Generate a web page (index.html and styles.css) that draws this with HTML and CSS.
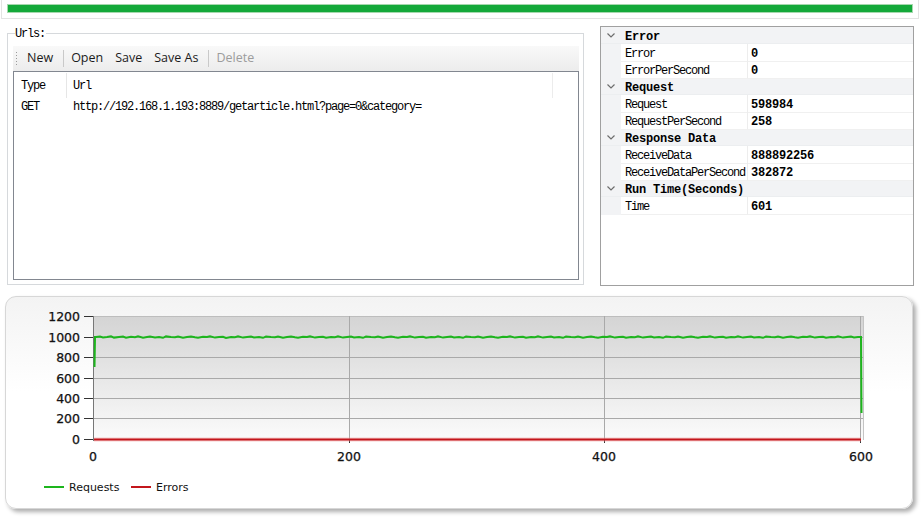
FILE: index.html
```html
<!DOCTYPE html>
<html>
<head>
<meta charset="utf-8">
<link rel="stylesheet" href="styles.css">
</head>
<body>
<div class="topbar"><div class="progress"></div></div>
<div class="middle">
  <div class="group">
    <span class="group-label">Urls:</span>
    <div class="toolbar">
      <span class="grip"></span>
      <span class="tb-btn">New</span>
      <span class="tb-sep"></span>
      <span class="tb-btn">Open</span>
      <span class="tb-btn">Save</span>
      <span class="tb-btn">Save As</span>
      <span class="tb-sep"></span>
      <span class="tb-btn disabled">Delete</span>
    </div>
    <div class="list">
      <div class="list-head">
        <span class="col-type">Type</span>
        <span class="col-url">Url</span>
      </div>
      <div class="list-row">
        <span class="col-type">GET</span>
        <span class="col-url nob">http://192.168.1.193:8889/getarticle.html?page=0&amp;category=</span>
      </div>
    </div>
  </div>
  <div class="props">
    <div class="cat"><span class="chev"><svg width="8" height="5" viewBox="0 0 8 5"><path d="M0.5 0.5 L4 4 L7.5 0.5" fill="none" stroke="#6d6d6d" stroke-width="1.2"/></svg></span><span class="cat-name">Error</span></div>
    <div class="prop"><span class="pm"></span><span class="pn">Error</span><span class="pv">0</span></div>
    <div class="prop"><span class="pm"></span><span class="pn">ErrorPerSecond</span><span class="pv">0</span></div>
    <div class="cat"><span class="chev"><svg width="8" height="5" viewBox="0 0 8 5"><path d="M0.5 0.5 L4 4 L7.5 0.5" fill="none" stroke="#6d6d6d" stroke-width="1.2"/></svg></span><span class="cat-name">Request</span></div>
    <div class="prop"><span class="pm"></span><span class="pn">Request</span><span class="pv">598984</span></div>
    <div class="prop"><span class="pm"></span><span class="pn">RequestPerSecond</span><span class="pv">258</span></div>
    <div class="cat"><span class="chev"><svg width="8" height="5" viewBox="0 0 8 5"><path d="M0.5 0.5 L4 4 L7.5 0.5" fill="none" stroke="#6d6d6d" stroke-width="1.2"/></svg></span><span class="cat-name">Response Data</span></div>
    <div class="prop"><span class="pm"></span><span class="pn">ReceiveData</span><span class="pv">888892256</span></div>
    <div class="prop"><span class="pm"></span><span class="pn">ReceiveDataPerSecond</span><span class="pv">382872</span></div>
    <div class="cat"><span class="chev"><svg width="8" height="5" viewBox="0 0 8 5"><path d="M0.5 0.5 L4 4 L7.5 0.5" fill="none" stroke="#6d6d6d" stroke-width="1.2"/></svg></span><span class="cat-name">Run Time(Seconds)</span></div>
    <div class="prop"><span class="pm"></span><span class="pn">Time</span><span class="pv">601</span></div>
  </div>
</div>
<div class="chart">
  <svg class="chart-svg" width="906" height="211" viewBox="6 297 906 211">
    <defs>
      <linearGradient id="pg" x1="0" y1="0" x2="0" y2="1">
        <stop offset="0" stop-color="#d4d4d4"/>
        <stop offset="1" stop-color="#fbfbfb"/>
      </linearGradient>
    </defs>
    <rect x="94" y="316" width="770" height="124" fill="url(#pg)"/>
    <g stroke="#a9a9a9" stroke-width="1">
      <line x1="94" y1="316.5" x2="864" y2="316.5" stroke="#bdbdbd"/>
      <line x1="94" y1="337.5" x2="864" y2="337.5"/>
      <line x1="94" y1="357.5" x2="864" y2="357.5"/>
      <line x1="94" y1="378.5" x2="864" y2="378.5"/>
      <line x1="94" y1="398.5" x2="864" y2="398.5"/>
      <line x1="94" y1="418.5" x2="864" y2="418.5"/>
      <line x1="349.5" y1="316" x2="349.5" y2="440"/>
      <line x1="604.5" y1="316" x2="604.5" y2="440"/>
      <line x1="860.5" y1="316" x2="860.5" y2="440"/>
      <line x1="863.5" y1="316" x2="863.5" y2="440" stroke="#c4c4c4"/>
    </g>
    <g stroke="#333" stroke-width="1">
      <line x1="93.5" y1="316" x2="93.5" y2="441" stroke="#777"/>
      <line x1="84" y1="316.5" x2="93" y2="316.5"/>
      <line x1="84" y1="337.5" x2="93" y2="337.5"/>
      <line x1="84" y1="357.5" x2="93" y2="357.5"/>
      <line x1="84" y1="378.5" x2="93" y2="378.5"/>
      <line x1="84" y1="398.5" x2="93" y2="398.5"/>
      <line x1="84" y1="418.5" x2="93" y2="418.5"/>
      <line x1="84" y1="439.5" x2="93" y2="439.5"/>
      <line x1="349.5" y1="440" x2="349.5" y2="443"/>
      <line x1="604.5" y1="440" x2="604.5" y2="443"/>
      <line x1="860.5" y1="440" x2="860.5" y2="443"/>
    </g>
    <g class="ylab" text-anchor="end">
      <text x="80" y="321">1200</text>
      <text x="80" y="342">1000</text>
      <text x="80" y="362">800</text>
      <text x="80" y="383">600</text>
      <text x="80" y="403">400</text>
      <text x="80" y="423">200</text>
      <text x="80" y="444">0</text>
    </g>
    <g class="xlab" text-anchor="middle">
      <text x="93" y="461">0</text>
      <text x="349" y="461">200</text>
      <text x="604" y="461">400</text>
      <text x="861" y="461">600</text>
    </g>
    <path d="M94 439.5 H861" stroke="#f2a0a0" stroke-width="4" fill="none" opacity="0.5"/>
    <path d="M94 439.5 H861" stroke="#c3161c" stroke-width="2.2" fill="none"/>
    <polyline fill="none" stroke="#1db51d" stroke-width="2" stroke-linejoin="miter" points="94.5,367 95,337 96,337 100,336.5 103,337.5 107,337 111,336.3 114,337.6 119,337 123,336.6 126,337.8 131,336.8 135,337.2 138,336.3 143,337.7 147,337 150,336.5 155,337.4 159,337 163,337.8 166,336.4 171,337 175,337.3 178,336.6 183,337.8 187,337 191,336.4 195,337.2 198,337.7 203,336.7 207,337 210,336.3 215,337.6 219,337.1 223,336.7 226,337.9 231,336.9 235,337.2 238,336.4 243,337.6 247,337 251,336.6 254,337.5 259,337 263,337.8 266,336.5 271,337.1 275,337.3 278,336.5 283,337.7 287,337 291,336.4 295,337.3 298,337.7 303,336.8 307,337 310,336.3 315,337.6 319,337.1 323,336.7 326,337.8 331,336.9 335,337.3 338,336.4 343,337.6 347,337 351,336.6 354,337.5 359,337 363,337.8 366,336.5 371,337.1 375,337.3 378,336.5 383,337.7 387,337 391,336.4 395,337.3 398,337.7 403,336.8 407,337 410,336.3 415,337.6 419,337.1 423,336.7 426,337.8 431,336.9 435,337.3 438,336.4 443,337.6 447,337 451,336.6 454,337.5 459,337 463,337.8 466,336.5 471,337.1 475,337.3 478,336.5 483,337.7 487,337 491,336.4 495,337.3 498,337.7 503,336.8 507,337 510,336.3 515,337.6 519,337.1 523,336.7 526,337.8 531,336.9 535,337.3 538,336.4 543,337.6 547,337 551,336.6 554,337.5 559,337 563,337.8 566,336.5 571,337.1 575,337.3 578,336.5 583,337.7 587,337 591,336.4 595,337.3 598,337.7 603,336.8 607,337 610,336.3 615,337.6 619,337.1 623,336.7 626,337.8 631,336.9 635,337.3 638,336.4 643,337.6 647,337 651,336.6 654,337.5 659,337 663,337.8 666,336.5 671,337.1 675,337.3 678,336.5 683,337.7 687,337 691,336.4 695,337.3 698,337.7 703,336.8 707,337 710,336.3 715,337.6 719,337.1 723,336.7 726,337.8 731,336.9 735,337.3 738,336.4 743,337.6 747,337 751,336.6 754,337.5 759,337 763,337.8 766,336.5 771,337.1 775,337.3 778,336.5 783,337.7 787,337 791,336.4 795,337.3 798,337.7 803,336.8 807,337 810,336.3 815,337.6 819,337.1 823,336.7 826,337.8 831,336.9 835,337.3 838,336.4 843,337.6 847,337 851,336.6 854,337.5 858,337 861,337 861.5,413"/>
    <line x1="44" y1="487" x2="64" y2="487" stroke="#1db51d" stroke-width="2"/>
    <text class="leg" x="69" y="491">Requests</text>
    <line x1="131" y1="487" x2="151" y2="487" stroke="#c3161c" stroke-width="2"/>
    <text class="leg" x="156" y="491">Errors</text>
  </svg>
</div>
</body>
</html>
```
FILE: styles.css
```css
html, body {
  margin: 0;
  padding: 0;
  background: #ffffff;
}
body {
  width: 921px;
  height: 519px;
  overflow: hidden;
  font-family: "Liberation Mono", "DejaVu Sans Mono", monospace;
  color: #000;
}
.topbar {
  box-sizing: border-box;
  width: 918px;
  height: 19px;
  margin-left: 1px;
  padding: 4px 5px 0 5px;
  border: 1px solid #e3e3e3;
  border-top: 0;
}
.progress {
  box-sizing: border-box;
  height: 9px;
  background: #14a93a;
  border: 1px solid #a6d8ae;
}
.middle {
  display: flex;
  align-items: flex-start;
  padding-top: 7px;
}
.group {
  position: relative;
  box-sizing: border-box;
  width: 577px;
  height: 252px;
  margin: 7px 0 0 7px;
  padding: 12px 4px 4px 5px;
  border: 1px solid #d6d9dc;
  display: flex;
  flex-direction: column;
}
.group-label {
  position: absolute;
  top: -7px;
  left: 7px;
  padding: 0 1px 0 0;
  background: #fff;
  font-size: 12px;
  line-height: 14px;
  letter-spacing: -1.2px;
}
.toolbar {
  box-sizing: border-box;
  height: 25px;
  padding-bottom: 1px;
  display: flex;
  align-items: center;
  background: linear-gradient(#f9f9f9, #ececec);
  font-family: "Open Sans", "Noto Sans", sans-serif;
  font-size: 12.5px;
  color: #1b1b1b;
}
.grip {
  width: 1px;
  height: 13px;
  margin: 0 4px 0 3px;
  background: repeating-linear-gradient(#9a9a9a 0 1px, transparent 1px 3px);
}
.tb-btn {
  padding: 0 6px;
  line-height: 20px;
}
.tb-btn.disabled {
  color: #9c9c9c;
}
.tb-sep {
  width: 1px;
  height: 17px;
  margin: 0 1px 0 4px;
  background: #c9c9c9;
}
.list {
  box-sizing: border-box;
  height: 209px;
  border: 1px solid #828790;
  background: #fff;
  font-size: 12px;
  letter-spacing: -1.2px;
}
.list-head {
  box-sizing: border-box;
  height: 26px;
  padding-top: 1px;
  display: flex;
  align-items: stretch;
}
.list-row {
  box-sizing: border-box;
  height: 17px;
  padding-top: 0;
  display: flex;
  align-items: center;
}
.list-head span {
  display: flex;
  align-items: center;
}
.col-type {
  box-sizing: border-box;
  width: 53px;
  padding-left: 7px;
  border-right: 1px solid #e6e6e6;
  flex: none;
}
.col-url {
  box-sizing: border-box;
  width: 486px;
  padding-left: 6px;
  border-right: 1px solid #ececec;
  flex: none;
  white-space: nowrap;
}
.list-row .col-type,
.col-url.nob {
  border-right-color: transparent;
}
.props {
  box-sizing: border-box;
  width: 314px;
  height: 260px;
  margin-left: 16px;
  border: 1px solid #a0a0a0;
  background: #fff;
  font-size: 12px;
}
.cat {
  box-sizing: border-box;
  height: 17px;
  padding-top: 3px;
  display: flex;
  align-items: center;
  background: #f2f3f5;
  border-bottom: 1px solid #eceef0;
}
.chev {
  width: 20px;
  margin-top: -2px;
  display: flex;
  justify-content: center;
  align-items: center;
}
.chev svg {
  display: block;
}
.cat-name {
  padding-left: 4px;
  font-weight: bold;
  letter-spacing: -0.2px;
}
.prop {
  height: 17px;
  display: grid;
  grid-template-columns: 20px 127px 1fr;
}
.pm {
  background: #f2f3f5;
}
.pn, .pv {
  box-sizing: border-box;
  display: flex;
  align-items: center;
  padding-top: 3px;
  border-bottom: 1px solid #f0f0f0;
  white-space: nowrap;
}
.pn {
  padding-left: 4px;
  border-right: 1px solid #ededed;
  letter-spacing: -1.2px;
}
.pv {
  padding-left: 3px;
  font-weight: bold;
  letter-spacing: -0.2px;
}
.chart {
  box-sizing: border-box;
  width: 908px;
  height: 213px;
  margin: 10px 0 0 5px;
  border: 1px solid #d7d7d7;
  border-radius: 11px;
  background: linear-gradient(#f3f3f3, #ffffff 45%);
  box-shadow: 3px 3px 4px rgba(0, 0, 0, 0.32);
}
.chart-svg {
  display: block;
  overflow: visible;
}
.ylab text, .xlab text {
  font-family: "DejaVu Sans", sans-serif;
  font-size: 12.5px;
  fill: #111;
  stroke: #111;
  stroke-width: 0.25px;
}
.leg {
  font-family: "DejaVu Sans", sans-serif;
  font-size: 11px;
  fill: #111;
}
```
